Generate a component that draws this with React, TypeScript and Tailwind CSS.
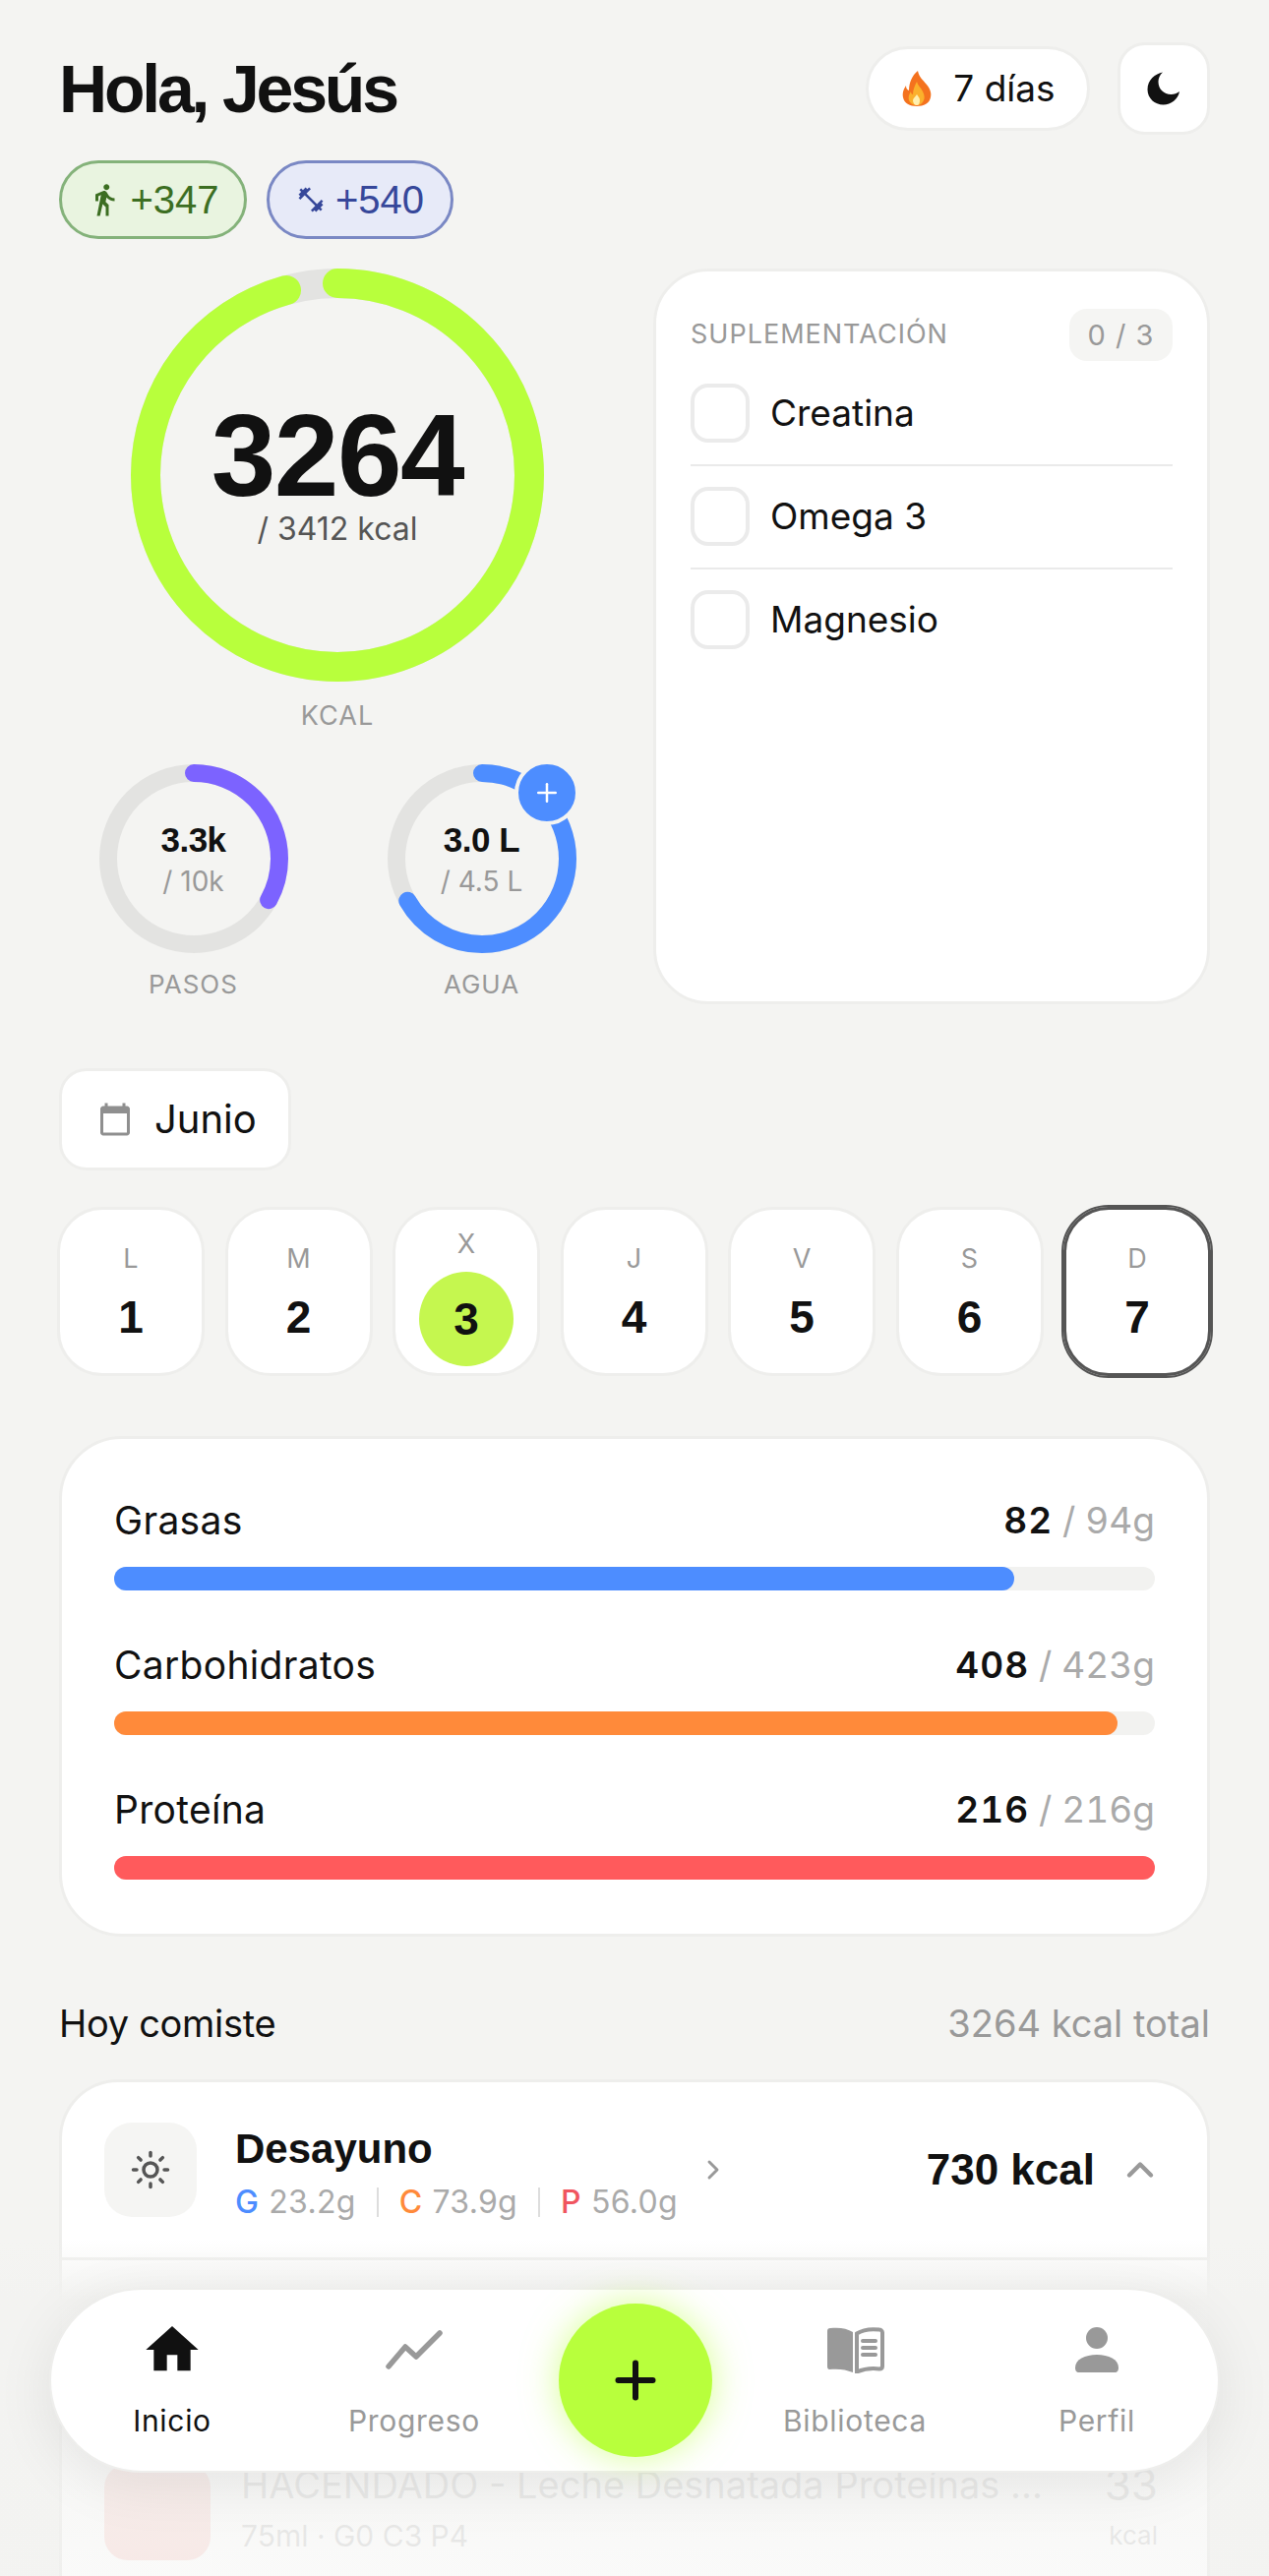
import { Plus, Sun, ChevronRight, ChevronUp } from "lucide-react";
import { MdDirectionsWalk, MdFitnessCenter, MdCalendarToday, MdHome } from "react-icons/md";

const sans = "font-['Inter',sans-serif]";
const display = "font-['Liberation_Sans',Arial,sans-serif]";

const days = [
  { letter: "L", day: 1 },
  { letter: "M", day: 2 },
  { letter: "X", day: 3, selected: true },
  { letter: "J", day: 4 },
  { letter: "V", day: 5 },
  { letter: "S", day: 6 },
  { letter: "D", day: 7, today: true },
];

const macros = [
  { name: "Grasas", value: 82, goal: 94, color: "bg-[#4d8dff]", width: 86.5 },
  { name: "Carbohidratos", value: 408, goal: 423, color: "bg-[#ff8a3a]", width: 96.4 },
  { name: "Proteína", value: 216, goal: 216, color: "bg-[#ff5a5c]", width: 100 },
];

const supplements = ["Creatina", "Omega 3", "Magnesio"];

function Ring({ size, stroke, value, color, children }: { size: number; stroke: number; value: number; color: string; children: React.ReactNode }) {
  const r = (size - stroke) / 2;
  const circ = 2 * Math.PI * r;
  return (
    <div className="relative" style={{ width: size, height: size }}>
      <svg width={size} height={size} className="block -rotate-90">
        <circle cx={size / 2} cy={size / 2} r={r} fill="none" stroke="#e3e3e1" strokeWidth={stroke} />
        <circle
          cx={size / 2}
          cy={size / 2}
          r={r}
          fill="none"
          stroke={color}
          strokeWidth={stroke}
          strokeLinecap="round"
          strokeDasharray={`${circ * value} ${circ}`}
        />
      </svg>
      <div className="absolute inset-0 flex flex-col items-center justify-center">{children}</div>
    </div>
  );
}

function Flame() {
  return (
    <svg width="34" height="38" viewBox="0 0 34 38">
      <path d="M18 1c1 6 5 9 9 14 4 5 5 9 4 13-1 6-7 9-14 9S4 34 3 28c-1-5 1-9 3-12 0 3 1 4 3 5 0-8 3-15 9-20z" fill="#f4721e" />
      <path d="M17 12c1 4 4 6 6 10 2 4 2 7 1 9-1 3-4 5-7 5s-7-2-8-5c-1-3 0-6 2-9 0 2 1 3 2 3 0-5 2-9 4-13z" fill="#fbb02c" />
      <path d="M17 25c1 2 3 3 3 6 0 3-1 5-3 5s-4-2-4-5c0-2 3-4 4-6z" fill="#fff0b0" />
    </svg>
  );
}

function Moon() {
  return (
    <svg width="36" height="36" viewBox="0 0 36 36">
      <path d="M17 1.500C9.500 3 1.500 9 1.500 19c0 9 7.500 15.500 16 15.500 8 0 15-5.500 16.500-13.500-2.500 2-5.500 3-8.500 3C18 24 12.500 18.500 12.500 11c0-3.500 1.500-7 4.500-9.500z" fill="#111" />
    </svg>
  );
}

function BookIcon() {
  return (
    <svg width="62" height="48" viewBox="0 0 62 48">
      <path d="M3 5c0-2 1-3 3-3 9-1 17 0 23 4v41c-7-3-15-4-24-3-1 0-2-1-2-3z" fill="#999" />
      <path d="M33 7.500c6-4 14-5 23-4 1 0 3 1 3 3v34c0 2-1 3-3 3-8-1-16 0-23 3z" fill="none" stroke="#999" strokeWidth="4" />
      <path d="M39 15h13M39 22h13M39 29h13" stroke="#999" strokeWidth="4" strokeLinecap="round" />
    </svg>
  );
}

function ChartIcon() {
  return (
    <svg width="58" height="40" viewBox="0 0 58 40">
      <path d="M3 37 20 17l11 10L55 3" fill="none" stroke="#999" strokeWidth="5.500" strokeLinecap="round" strokeLinejoin="round" />
    </svg>
  );
}

function PersonIcon() {
  return (
    <svg width="46" height="46" viewBox="0 0 46 46">
      <circle cx="23" cy="11" r="11" fill="#999" />
      <path d="M1 41c0-8 10-13 22-13s22 5 22 13c0 3-1 5-4 5H5c-3 0-4-2-4-5z" fill="#999" />
    </svg>
  );
}

function DayCard({ letter, day, selected, today }: { letter: string; day: number; selected?: boolean; today?: boolean }) {
  return (
    <div
      className={`flex h-[172px] w-[150px] shrink-0 flex-col items-center rounded-[46px] border-[3px] bg-white ${
        selected ? "pt-[18px]" : "pt-[33px]"
      } ${today ? "border-[#555] outline-2 outline-[#555]" : "border-[#eeeeec]"}`}
    >
      <span className={`${sans} text-[27px] leading-[34px] text-[#999]`}>{letter}</span>
      {selected ? (
        <span className={`${display} mt-[11px] flex size-[96px] items-center justify-center rounded-full bg-[#c5f74f] text-[46px] font-bold text-[#111]`}>
          {day}
        </span>
      ) : (
        <span className={`${display} mt-[17px] text-[46px] leading-[50px] font-bold text-[#111]`}>{day}</span>
      )}
    </div>
  );
}

function NavItem({ label, active, children }: { label: string; active?: boolean; children: React.ReactNode }) {
  return (
    <div className="flex w-[246px] flex-col items-center">
      <div className="flex h-[50px] items-center justify-center">{children}</div>
      <span className={`${sans} mt-[29px] text-[30px] leading-[36px] tracking-[0.7px] ${active ? "text-[#111]" : "text-[#999]"}`}>{label}</span>
    </div>
  );
}

export default function App() {
  return (
    <div className={`${sans} relative h-[2619px] w-[1290px] overflow-hidden bg-[#f4f4f2] text-[#111]`}>
      <main className="px-[60px] pt-[43px]">
        <header className="flex items-start justify-between">
          <div>
            <h1 className={`${display} mt-[9px] text-[68px] leading-[76px] font-bold tracking-[-3.2px]`}>Hola, Jesús</h1>
            <div className="mt-[35px] flex gap-[20px]">
              <div className="flex h-[80px] w-[191px] items-center justify-center gap-[8px] rounded-full border-[3px] border-[#84b27a] bg-[#e9f4e0] text-[40px] text-[#3c6e22]">
                <MdDirectionsWalk size={36} />
                <span className={display}>+347</span>
              </div>
              <div className="flex h-[80px] w-[190px] items-center justify-center gap-[10px] rounded-full border-[3px] border-[#7a88c4] bg-[#e7eaf8] text-[40px] text-[#36479a]">
                <MdFitnessCenter size={30} />
                <span className={display}>+540</span>
              </div>
            </div>
          </div>
          <div className="flex items-start gap-[28px]">
            <div className="mt-[4px] flex h-[86px] w-[228px] items-center justify-center gap-[20px] rounded-full border-[3px] border-[#eeeeec] bg-white">
              <Flame />
              <span className="text-[37px]">7 días</span>
            </div>
            <button className="flex size-[94px] items-center justify-center rounded-[28px] border-[3px] border-[#eeeeec] bg-white">
              <Moon />
            </button>
          </div>
        </header>

        <section className="mt-[30px] flex items-start justify-between">
          <div className="flex w-[566px] flex-col items-center">
            <Ring size={420} stroke={30} value={3264 / 3412} color="#b8ff3c">
              <span className={`${display} mt-[-7px] text-[118px] leading-[118px] font-bold tracking-[-1.5px]`}>3264</span>
              <span className="mt-[-2px] text-[32px] leading-[36px] text-[#555]">/ 3412 kcal</span>
            </Ring>
            <span className="mt-[18px] text-[27px] leading-[34px] tracking-[1px] text-[#999]">KCAL</span>
            <div className="mt-[32px] flex gap-[101px]">
              <div className="flex flex-col items-center">
                <Ring size={192} stroke={18} value={0.33} color="#7c63ff">
                  <span className={`${display} text-[35px] leading-[42px] font-bold tracking-[-0.5px]`}>3.3k</span>
                  <span className="mt-[4px] text-[28px] leading-[34px] text-[#999]">/ 10k</span>
                </Ring>
                <span className="mt-[16px] text-[26px] leading-[32px] tracking-[1px] text-[#999]">PASOS</span>
              </div>
              <div className="relative flex flex-col items-center">
                <Ring size={192} stroke={18} value={0.667} color="#4d8dff">
                  <span className={`${display} text-[35px] leading-[42px] font-bold tracking-[-0.5px]`}>3.0 L</span>
                  <span className="mt-[4px] text-[28px] leading-[34px] text-[#999]">/ 4.5 L</span>
                </Ring>
                <span className="mt-[16px] text-[26px] leading-[32px] tracking-[1px] text-[#999]">AGUA</span>
                <button className="absolute top-[-4px] right-[-3px] flex size-[66px] items-center justify-center rounded-full border-[4px] border-[#f4f4f2] bg-[#4d8dff] text-white">
                  <Plus size={30} strokeWidth={2} />
                </button>
              </div>
            </div>
          </div>

          <div className="h-[748px] w-[566px] rounded-[56px] border-[3px] border-[#eeeeec] bg-white px-[35px] pt-[38px]">
            <div className="flex items-center justify-between">
              <span className="text-[27px] tracking-[1px] text-[#999]">SUPLEMENTACIÓN</span>
              <span className="flex h-[53px] w-[105px] items-center justify-center rounded-[18px] bg-[#f5f5f3] text-[29px] tracking-[1px] text-[#999]">0 / 3</span>
            </div>
            <div className="mt-[23px]">
              {supplements.map((name, i) => (
                <div
                  key={name}
                  className={`flex items-center gap-[21px] ${i < supplements.length - 1 ? "mb-[21px] border-b-[2px] border-[#eaeaea] pb-[22px]" : ""}`}
                >
                  <span className="size-[60px] rounded-[18px] border-[4px] border-[#ebebeb]" />
                  <span className="text-[37px] leading-[60px]">{name}</span>
                </div>
              ))}
            </div>
          </div>
        </section>

        <button className="mt-[65px] flex h-[104px] w-[236px] items-center gap-[22px] rounded-[28px] border-[3px] border-[#eeeeec] bg-white pl-[36px]">
          <MdCalendarToday size={36} className="text-[#8f8f8f]" />
          <span className="text-[40px]">Junio</span>
        </button>

        <div className="mt-[37px] ml-[-2px] flex w-[1176px] gap-[20.500px]">
          {days.map((d) => (
            <DayCard key={d.day} {...d} />
          ))}
        </div>

        <section className="mt-[61px] rounded-[64px] border-[3px] border-[#eeeeec] bg-white px-[53px] pt-[60px] pb-[55px]">
          {macros.map((m, i) => (
            <div key={m.name} className={i > 0 ? "mt-[53px]" : ""}>
              <div className="flex h-[46px] items-center justify-between text-[39px]">
                <span className="tracking-[0.3px]">{m.name}</span>
                <span className="text-[37px] tabular-nums">
                  <span className="font-semibold tracking-[1px]">{m.value}</span>
                  <span className="text-[#aaa]"> / {m.goal}g</span>
                </span>
              </div>
              <div className="mt-[24px] h-[24px] rounded-full bg-[#f2f2f0]">
                <div className={`h-full rounded-full ${m.color}`} style={{ width: `${m.width}%` }} />
              </div>
            </div>
          ))}
        </section>

        <div className="mt-[63px] flex h-[50px] items-center justify-between">
          <span className="text-[38px] tracking-[-0.3px]">Hoy comiste</span>
          <span className="text-[38px] text-[#999]">3264 kcal total</span>
        </div>

        <section className="mt-[32px] h-[560px] rounded-t-[60px] border-x-[3px] border-t-[3px] border-[#eeeeec] bg-white">
          <div className="flex h-[181px] items-center border-b-[3px] border-[#eeeeec] pr-[46px] pl-[43px]">
            <div className="flex h-[96px] w-[94px] items-center justify-center rounded-[28px] bg-[#f5f5f3]">
              <Sun size={42} strokeWidth={2} className="text-[#555]" />
            </div>
            <div className="mt-[6px] ml-[39px]">
              <div className={`${display} text-[42px] leading-[50px] font-bold`}>Desayuno</div>
              <div className="mt-[9px] flex items-center text-[32px] leading-[40px] tracking-[0.3px] text-[#aaa]">
                <span className="font-medium text-[#4d8dff]">G</span>
                <span className="ml-[10px]">23.2g</span>
                <span className="mx-[21px] h-[30px] w-[2px] bg-[#ddd]" />
                <span className="font-medium text-[#ff8a3a]">C</span>
                <span className="ml-[10px]">73.9g</span>
                <span className="mx-[21px] h-[30px] w-[2px] bg-[#ddd]" />
                <span className="font-medium text-[#f0555f]">P</span>
                <span className="ml-[10px]">56.0g</span>
              </div>
            </div>
            <ChevronRight size={32} strokeWidth={2.2} className="ml-[20px] text-[#999]" />
            <span className={`${display} ml-auto text-[44px] font-bold`}>730 kcal</span>
            <ChevronUp size={44} strokeWidth={2.4} className="ml-[24px] text-[#999]" />
          </div>
          <div className="mt-[203px] flex items-start pr-[50px] pl-[43px] opacity-[0.14]">
            <div className="mt-[4px] h-[98px] w-[108px] rounded-[24px] bg-[#e8402f]" />
            <div className="ml-[31px] flex-1">
              <div className="text-[38px] leading-[50px] whitespace-nowrap">HACENDADO - Leche Desnatada Proteínas ...</div>
              <div className="mt-[8px] text-[30px] leading-[38px]">75ml · G0 C3 P4</div>
            </div>
            <div className="ml-[30px] flex flex-col items-end">
              <div className="text-[44px] leading-[50px]">33</div>
              <div className="mt-[8px] text-[26px] leading-[38px]">kcal</div>
            </div>
          </div>
        </section>
      </main>

      {/* Bottom fade + floating nav */}
      <div className="absolute inset-x-0 top-[2259px] bottom-0 bg-gradient-to-b from-transparent from-[5%] via-[#f3f3f1] via-[22%] to-[#f2f2f0]/40" />
      <nav className="absolute top-[2326px] left-[50px] flex h-[188px] w-[1190px] items-start justify-between rounded-full border-[2px] border-[#eeeeec] bg-white pt-[36px] shadow-[0_12px_60px_rgba(0,0,0,0.08)]">
        <div className="flex">
          <NavItem label="Inicio" active>
            <MdHome size={64} className="text-[#111]" />
          </NavItem>
          <NavItem label="Progreso">
            <ChartIcon />
          </NavItem>
        </div>
        <div className="flex">
          <NavItem label="Biblioteca">
            <BookIcon />
          </NavItem>
          <NavItem label="Perfil">
            <PersonIcon />
          </NavItem>
        </div>
        <button className="absolute top-[14px] left-[516px] flex size-[156px] items-center justify-center rounded-full bg-[#b8ff3c] text-[#111] shadow-[0_0_36px_rgba(184,255,60,0.55)]">
          <Plus size={60} strokeWidth={2.4} />
        </button>
      </nav>
    </div>
  );
}
